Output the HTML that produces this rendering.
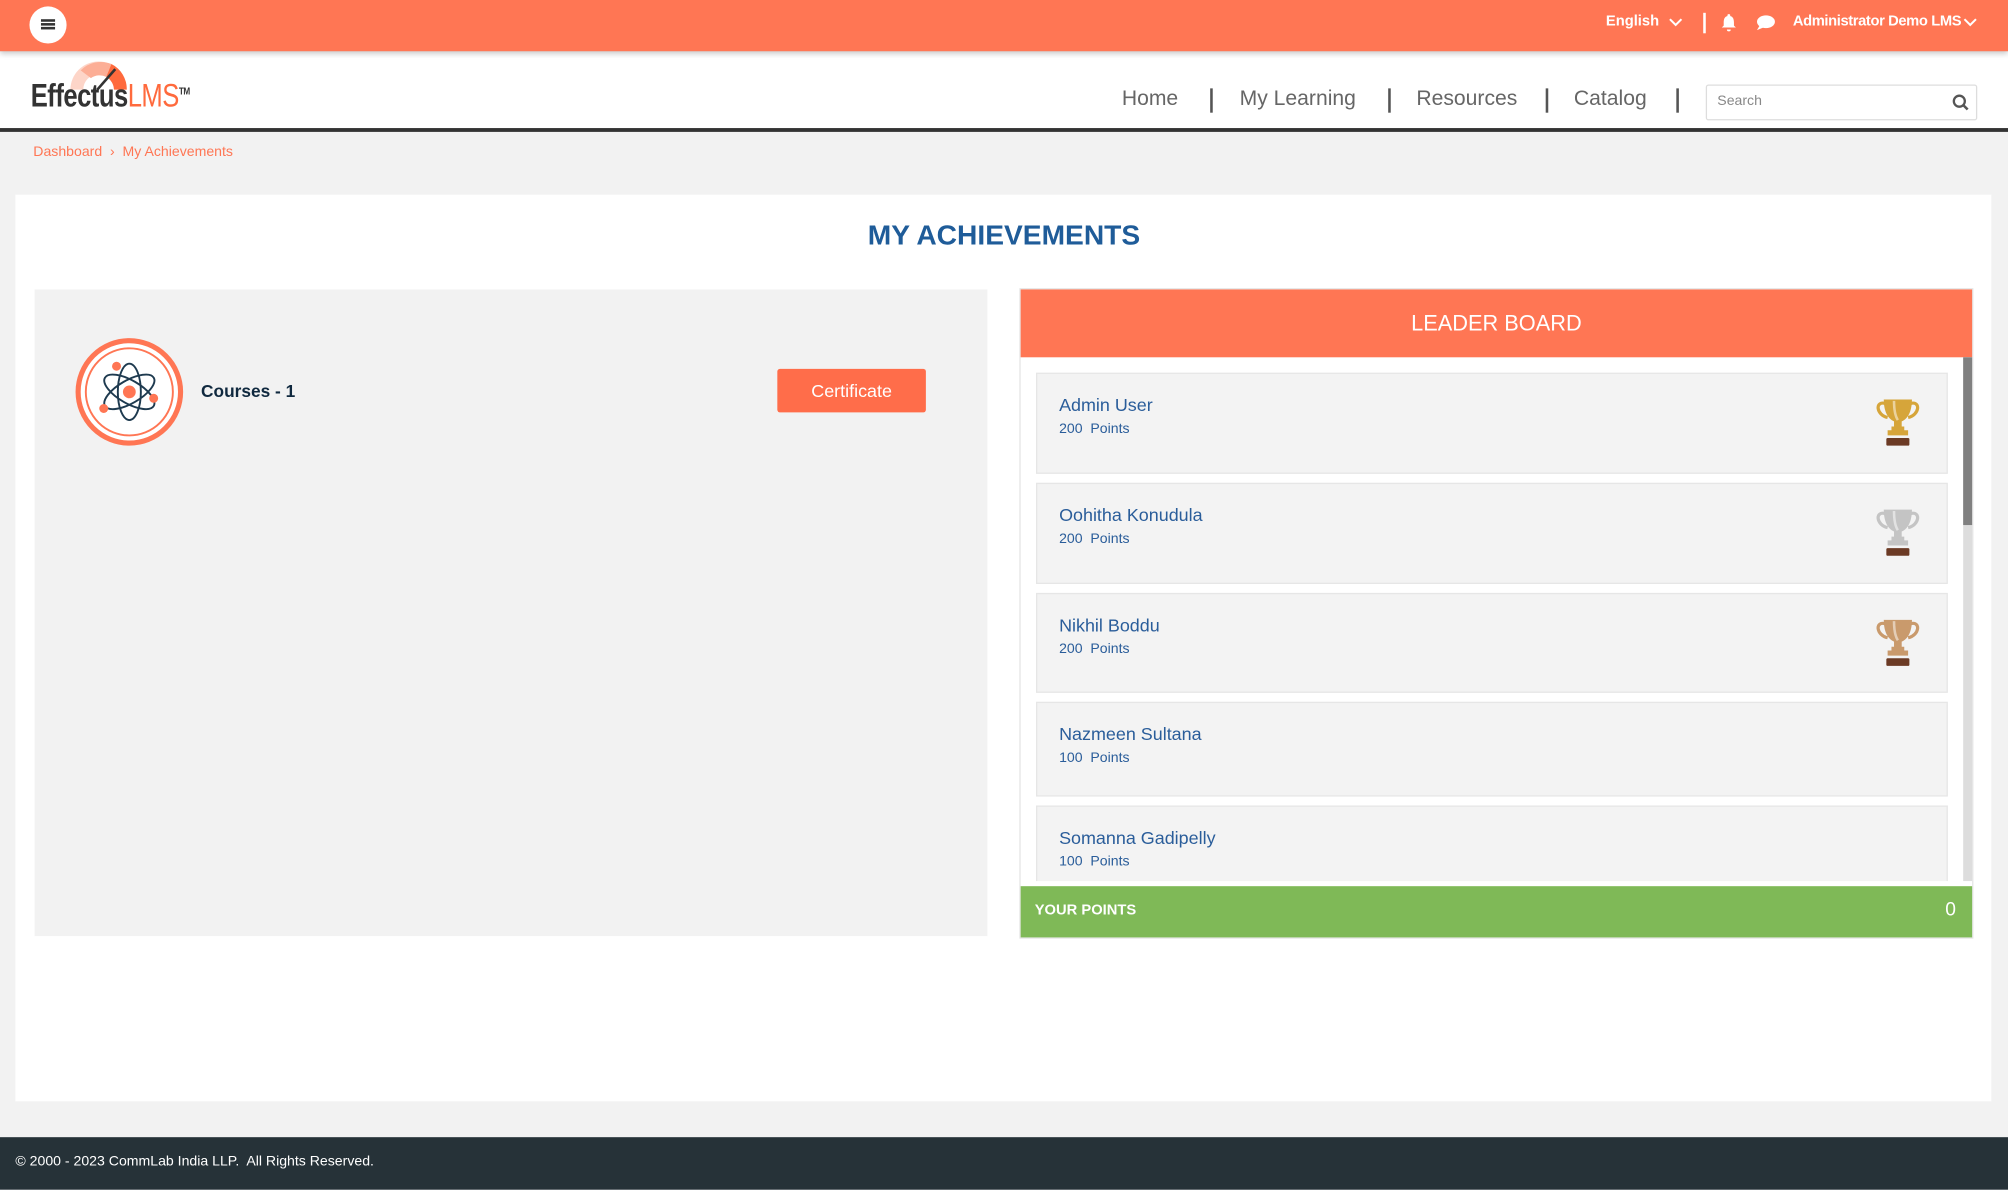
<!DOCTYPE html>
<html><head><meta charset="utf-8">
<style>
*{margin:0;padding:0;box-sizing:border-box}
html,body{width:2008px;height:1190px;overflow:hidden;background:#f2f2f2;font-family:"Liberation Sans",sans-serif}
#w{position:absolute;left:0;top:0;width:1568px;height:929px;transform:scale(1.28061);transform-origin:0 0;background:#f2f2f2}
.a{position:absolute}
.top{left:0;top:0;width:1568px;height:40px;background:#ff7654;box-shadow:0 2px 4px rgba(0,0,0,.2);z-index:2}
.hdr{left:0;top:40px;width:1568px;height:63px;background:#fff;border-bottom:3px solid #333}
.nav{top:68px;font-size:16.5px;color:#666}
.sep{top:69px;width:2px;height:19px;background:#555}
.tw{color:#fff;font-size:11.5px;font-weight:bold}
.card{left:12px;top:152px;width:1543px;height:708px;background:#fff}
.item{left:809px;width:712px;background:#f3f3f3;border:1px solid #e6e6e6}
.item .n{position:absolute;left:17px;top:16px;font-size:14px;color:#2a5d9a}
.item .p{position:absolute;left:17px;top:37px;font-size:11px;color:#2a5d9a}
.item svg{position:absolute;left:652px;top:17px}
</style></head><body><div id="w">
<div class="a top">
 <div class="a" style="left:23px;top:5px;width:29px;height:29px;border-radius:50%;background:#fff"></div>
 <div class="a" style="left:32px;top:15px;width:11px;height:2px;background:#333;box-shadow:0 3px 0 #333,0 6px 0 #333"></div>
 <div class="a tw" style="left:1254px;top:11px">English</div>
 <svg class="a" style="left:1303px;top:14px" width="11" height="8"><path d="M1 1l4.5 4.5L10 1" stroke="#fff" stroke-width="1.6" fill="none"/></svg>
 <div class="a" style="left:1330px;top:10px;width:1.5px;height:16px;background:#fff"></div>
 <svg class="a" style="left:1343px;top:10px" width="14" height="15"><path d="M7 1a1 1 0 0 1 1 1.5c2.5.6 3 2.8 3 5v2.5l1.5 1.5H1.5L3 10V7.5c0-2.2.5-4.4 3-5A1 1 0 0 1 7 1zM5.5 13h3a1.5 1.5 0 0 1-3 0z" fill="#fff"/></svg>
 <svg class="a" style="left:1371px;top:11px" width="16" height="13"><ellipse cx="8" cy="6" rx="7" ry="5" fill="#fff"/><path d="M3 9l-2 3.5 5-2z" fill="#fff"/></svg>
 <div class="a tw" style="left:1400px;top:11px;letter-spacing:-.3px">Administrator Demo LMS</div>
 <svg class="a" style="left:1533px;top:14px" width="11" height="8"><path d="M1 1l4.5 4.5L10 1" stroke="#fff" stroke-width="1.6" fill="none"/></svg>
</div>
<div class="a hdr"></div>
<svg class="a" style="left:53px;top:46px" width="50" height="26"><path d="M2 24A22 22 0 0 1 46 24H36A12 12 0 0 0 12 24Z" fill="#fdd5c8"/><path d="M10 9A22 22 0 0 1 34 4L30 14A12 12 0 0 0 18 15Z" fill="#fcae96"/><path d="M34 4A22 22 0 0 1 46 24H36A12 12 0 0 0 30 14Z" fill="#ff6a3d"/><path d="M23 24L37 8" stroke="#333" stroke-width="2"/></svg>
<div class="a" style="left:24px;top:61px;font-size:25px;font-weight:bold;letter-spacing:-.5px;transform:scaleX(.8);transform-origin:0 0"><span style="color:#333">Effectus</span><span style="color:#ff6a3d;font-weight:normal">LMS</span><sup style="font-size:8px;color:#333">TM</sup></div>
<div class="a nav" style="left:876px">Home</div><div class="a sep" style="left:945px"></div>
<div class="a nav" style="left:968px">My Learning</div><div class="a sep" style="left:1084px"></div>
<div class="a nav" style="left:1106px">Resources</div><div class="a sep" style="left:1207px"></div>
<div class="a nav" style="left:1229px">Catalog</div><div class="a sep" style="left:1309px"></div>
<div class="a" style="left:1332px;top:66px;width:212px;height:28px;border:1px solid #ddd;border-radius:2px;background:#fff"></div>
<div class="a" style="left:1341px;top:73px;font-size:11px;color:#888">Search</div>
<svg class="a" style="left:1524px;top:73px" width="14" height="14"><circle cx="6" cy="6" r="4.3" stroke="#555" stroke-width="1.8" fill="none"/><path d="M9 9l3.5 3.5" stroke="#555" stroke-width="2"/></svg>
<div class="a" style="left:26px;top:113px;font-size:11px;color:#ff7654">Dashboard &nbsp;›&nbsp; My Achievements</div>
<div class="a card"></div>
<div class="a" style="left:0;width:1568px;top:171px;text-align:center;font-size:22px;font-weight:bold;color:#1f5c99">MY ACHIEVEMENTS</div>
<div class="a" style="left:27px;top:226px;width:744px;height:505px;background:#f2f2f2"></div>
<svg class="a" style="left:58px;top:263px" width="86" height="86"><circle cx="43" cy="43" r="40" fill="#fff" stroke="#ff7654" stroke-width="4"/><circle cx="43" cy="43" r="34" fill="none" stroke="#ff7654" stroke-width="1.5"/>
<g fill="none" stroke="#1e3a4f" stroke-width="1.5"><ellipse cx="43" cy="43" rx="22" ry="9" transform="rotate(30 43 43)"/><ellipse cx="43" cy="43" rx="22" ry="9" transform="rotate(-30 43 43)"/><ellipse cx="43" cy="43" rx="22" ry="9" transform="rotate(90 43 43)"/></g>
<circle cx="43" cy="43" r="5" fill="#ff7654"/><circle cx="33" cy="23" r="3.5" fill="#ff7654"/><circle cx="62" cy="48" r="3.5" fill="#ff7654"/><circle cx="23" cy="56" r="3.5" fill="#ff7654"/></svg>
<div class="a" style="left:157px;top:298px;font-size:13.5px;font-weight:bold;color:#10293f">Courses - 1</div>
<div class="a" style="left:607px;top:288px;width:116px;height:34px;background:#ff6d4a;border-radius:2px;color:#fff;font-size:14px;text-align:center;line-height:34px">Certificate</div>
<div class="a" style="left:796px;top:225px;width:745px;height:508px;background:#fff;border:1px solid #e5e5e5"></div>
<div class="a" style="left:797px;top:226px;width:743px;height:53px;background:#ff7654;color:#fff;font-size:17px;text-align:center;line-height:53px">LEADER BOARD</div>
<div class="a" style="left:1533px;top:279px;width:7px;height:409px;background:#ddd"></div>
<div class="a" style="left:1533px;top:279px;width:7px;height:131px;background:#808080"></div>
<svg width="0" height="0" style="position:absolute"><defs>
<symbol id="t" viewBox="0 0 40 42"><path d="M10 6C2 4 3 15 12 17M30 6c8-2 7 9-2 11" stroke="currentColor" stroke-width="2.5" fill="none"/><path d="M9 3h22c0 9-3 15-8 17v4h2v3h3v4H12v-4h3v-3h2v-4C12 18 9 12 9 3z" fill="currentColor"/><path d="M17 4c0 8 1 12 3 15" stroke="#fff" stroke-opacity=".5" stroke-width="2" fill="none"/><rect x="11" y="33" width="18" height="6" rx="1" fill="#6b3a24"/></symbol></defs></svg>
<div class="a item" style="top:291px;height:79px"><div class="n">Admin User</div><div class="p">200&nbsp; Points</div><svg width="40" height="42"><use href="#t" style="color:#d6a53a"/></svg></div>
<div class="a item" style="top:377px;height:79px"><div class="n">Oohitha Konudula</div><div class="p">200&nbsp; Points</div><svg width="40" height="42"><use href="#t" style="color:#c4c4c4"/></svg></div>
<div class="a item" style="top:463px;height:78px"><div class="n">Nikhil Boddu</div><div class="p">200&nbsp; Points</div><svg width="40" height="42"><use href="#t" style="color:#c99a6c"/></svg></div>
<div class="a item" style="top:548px;height:74px"><div class="n">Nazmeen Sultana</div><div class="p">100&nbsp; Points</div></div>
<div class="a item" style="top:629px;height:59px;border-bottom:none"><div class="n">Somanna Gadipelly</div><div class="p">100&nbsp; Points</div></div>
<div class="a" style="left:797px;top:692px;width:743px;height:40px;background:#7fb957"></div>
<div class="a" style="left:808px;top:705px;font-size:11.5px;font-weight:bold;color:#fff">YOUR POINTS</div>
<div class="a" style="left:1519px;top:702px;font-size:15px;color:#fff">0</div>
<div class="a" style="left:0;top:888px;width:1568px;height:41px;background:#263238"></div>
<div class="a" style="left:12px;top:901px;font-size:11px;color:#fff">© 2000 - 2023 CommLab India LLP.&nbsp; All Rights Reserved.</div>
</div></body></html>
